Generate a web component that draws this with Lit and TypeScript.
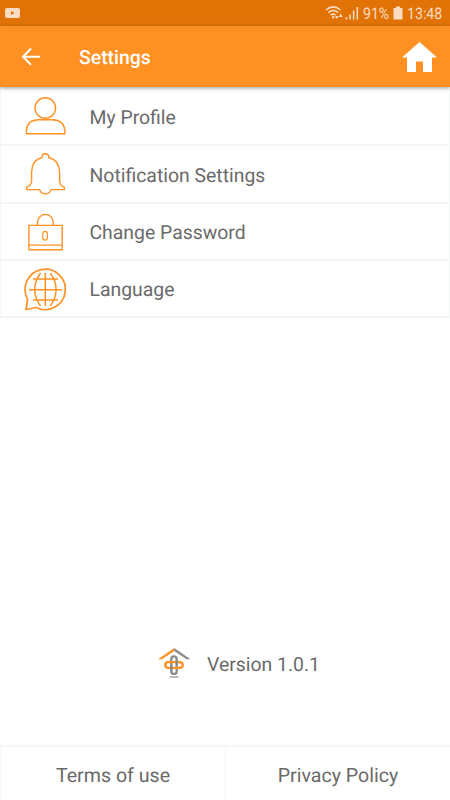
import { LitElement, html, svg, css } from "lit";
import { customElement } from "lit/decorators.js";

const profile = svg`<circle cx="45.300" cy="107.500" r="10.300"/><path d="M26.400 133.200V130q1-10.500 12-10.700h14q11.500.2 12.500 10.700v3.200z"/>`;
const bell = svg`<path d="M42 157.500q-.5-3.600 3.300-3.700 3.800.1 3.300 3.700 10.600 2.500 11 14.500v9q.2 4.500 4.800 6.300v2.300H51q-1.300 4.300-5.700 4.300t-5.700-4.300H26.500v-2.300q4.900-1.800 5.100-6.300v-9q.3-12 10.400-14.500z"/>`;
const lock = svg`<path d="M28.900 225.400h33.300v24.400H28.900zM28.900 245.100h33.300M37.500 225v-3.500a7.900 8 0 0 1 15.700 0v3.500"/><rect x="42.800" y="231.400" width="4.600" height="8.700" rx="2.300" stroke-width="1.200"/>`;
const globe = svg`<g stroke-width="1.700"><path d="M36.200 307L26 309L27.600 298.800A20.200 20.200 0 1 1 36.200 307z"/><path stroke-width="1.500" d="M45.300 272.500v33M29 289.200h33M33 278.500h25M33 299.600h25M40.500 272.500q-11.600 16.500 0 33M50.300 272.500q11.600 16.500 0 33"/></g>`;

@customElement("app-root")
export class AppRoot extends LitElement {
  static styles = css`
    :host { display: flex; flex-direction: column; width: 450px; height: 800px; overflow: hidden; background: #fff; font-family: Roboto, sans-serif; color: #6a6a6a; text-rendering: geometricPrecision; }
    * { box-sizing: border-box; }
    svg { display: block; flex: none; }
    .status { height: 26px; flex: none; background: #e17306; display: flex; align-items: center; color: #f9dcc2; padding: 0 7px 0 5px; }
    .status svg:nth-child(2) { margin-left: auto; }
    .pct, .time { font-size: 16px; line-height: 26px; white-space: nowrap; transform-origin: left; padding-top: 2px; }
    .pct { width: 27px; margin-left: 4px; margin-right: 3px; transform: scaleX(.88); }
    .time { width: 36px; margin-left: 4px; transform: scaleX(.885); }
    .bar { height: 61px; flex: none; background: #ff9123; display: flex; align-items: center; padding: 1px 13px 0 21px; box-shadow: 0 1px 4px rgba(0,0,0,.4); z-index: 1; }
    h1 { margin: 0 auto 0 38px; font-size: 19.4px; line-height: 28px; font-weight: 500; color: #fff; padding-top: 2px; }
    .list { display: grid; grid-template-rows: 57px 58px 57px 57px; flex: none; border: 1px solid #f2f6f6; border-top: 0; border-bottom-width: 2px; }
    .row { display: flex; align-items: center; padding-left: 19px; font-size: 19.400px; gap: 19.500px; padding-top: 3px; }
    .row + .row { border-top: 2px solid #f2f6f6; padding-top: 2px; }
    .row span { line-height: 24px; padding-top: 1px; }
    .row:nth-child(2) span { padding-top: 0; line-height: 23px; }
    .icon { fill: none; stroke: #ff9123; stroke-width: 1.4; stroke-linejoin: round; }
    .version { margin-top: auto; display: flex; align-items: center; height: 36px; margin-bottom: 64px; padding-left: 158px; font-size: 19.400px; gap: 16px; }
    .version span { padding-top: 2px; }
    .foot { flex: none; height: 55px; display: flex; border-top: 2px solid #f2f6f6; border-left: 1px solid #f2f6f6; font-size: 19.600px; }
    .foot div { flex: 1; display: flex; align-items: center; justify-content: center; padding-top: 4px; }
    .foot div + div { border-left: 1px solid #f2f6f6; }
  `;

  private row(label: string, top: number, shape: unknown) {
    return html`<div class="row">
      <svg class="icon" width="50" height="50" viewBox="20 ${top} 50 50">${shape}</svg>
      <span>${label}</span>
    </div>`;
  }

  render() {
    return html`
      <div class="status">
        <svg width="15" height="12" viewBox="0 0 15 12"><rect y="1" width="15" height="10" rx="2" fill="#f9dcc2"/><path d="M6 4v4l3.500-2z" fill="#e17306"/></svg>
        <svg width="34" height="16" viewBox="325 5 34 16" fill="none" stroke="#f9dcc2" stroke-width="1.500">
          <path d="M326 10q7.200-6.200 14.400 0M328.300 12.600q4.900-4.100 9.800 0M330.700 15.100q2.500-2 4.800 0"/>
          <circle cx="333.200" cy="17.300" r="1.200" fill="#f9dcc2" stroke="none"/>
          <path d="M335 16l1.800 3 1.800-3zM338.700 17l2-3.400 2 3.400z" fill="#f9dcc2" stroke="none"/>
          <path d="M346.500 19.500v-2.500M350 19.500v-5M353.600 19.500v-9M357.300 19.500v-12.500"/>
        </svg>
        <span class="pct">91%</span>
        <svg width="10" height="14" viewBox="0 0 10 14"><path d="M3 .5h4V2h2.500v11.500h-9V2H3z" fill="#f9dcc2"/></svg>
        <span class="time">13:48</span>
      </div>
      <div class="bar">
        <svg width="20" height="20" viewBox="0 0 20 20" fill="none" stroke="#fff" stroke-width="2"><path d="M10 1.500L2 9.700l8 8.200M2 9.700h17"/></svg>
        <h1>Settings</h1>
        <svg width="35" height="30" viewBox="0 0 35 30" fill="#fff"><path d="M17.500 0L35 15.500h-5V30h-9V19.500h-7V30H5V15.500H0z"/></svg>
      </div>
      <div class="list">
        ${this.row("My Profile", 91.5, profile)}
        ${this.row("Notification Settings", 150, bell)}
        ${this.row("Change Password", 208, lock)}
        ${this.row("Language", 264.5, globe)}
      </div>
      <div class="version">
        <svg width="33" height="30" viewBox="158 648 33 30" fill="none">
          <path d="M158 659.300L174.200 648V651L162 659.300z" fill="#ff9123"/>
          <path d="M190.500 659.300L174.200 648V651L186.500 659.300z" fill="#8c8c8c"/>
          <rect x="171.300" y="656.400" width="5.400" height="17.500" rx="2.700" stroke="#8c8c8c" stroke-width="2.400"/>
          <rect x="165.300" y="662.100" width="17.400" height="5.800" rx="2.900" stroke="#ff9123" stroke-width="2.400"/>
          <path d="M176.700 660v4.300M171.300 666v4.500" stroke="#8c8c8c" stroke-width="2.400"/>
          <path d="M169.500 677h9" stroke="#8c8c8c" stroke-width="1.200"/>
        </svg>
        <span>Version 1.0.1</span>
      </div>
      <div class="foot"><div>Terms of use</div><div>Privacy Policy</div></div>
    `;
  }
}
